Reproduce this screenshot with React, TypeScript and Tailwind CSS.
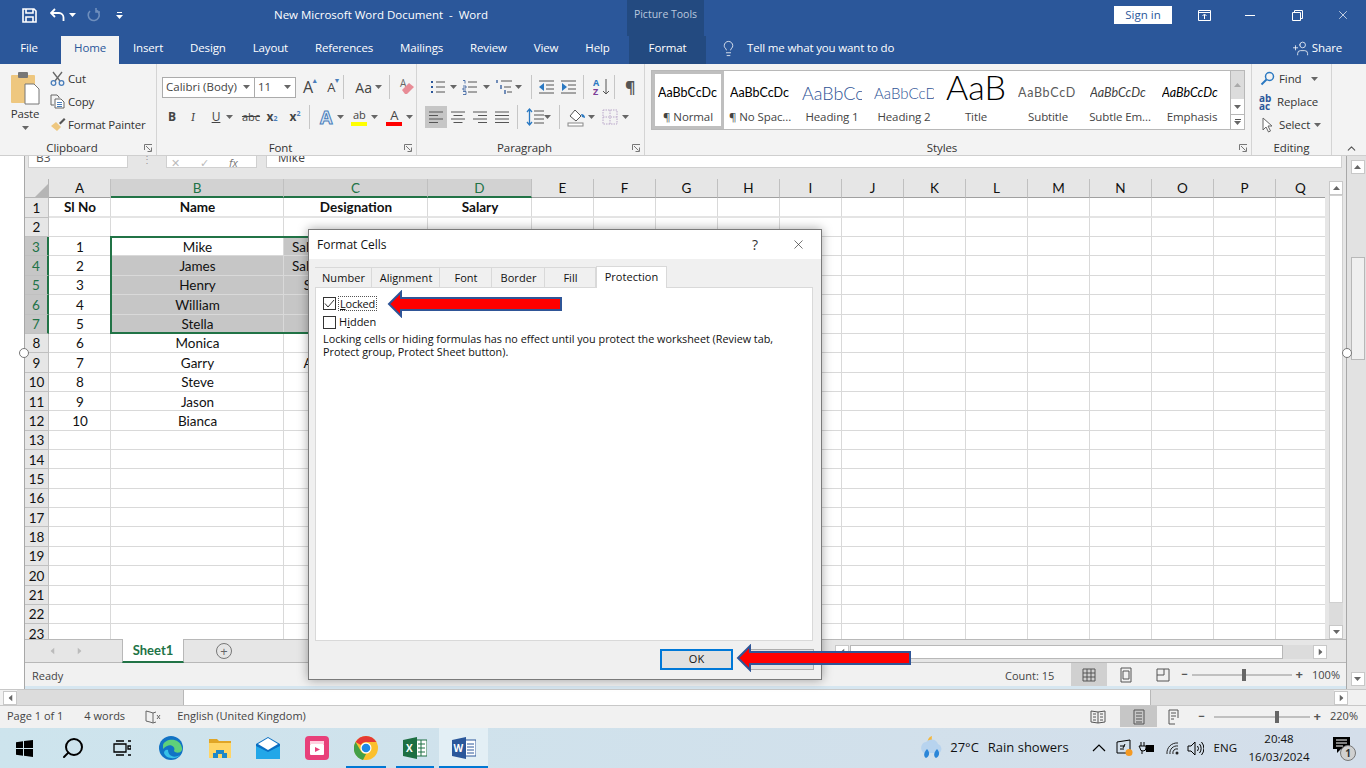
import { ChevronUp, Lightbulb, Search, UserPlus, X } from "lucide-react";
import type { ReactNode } from "react";

const ui = "font-['Open_Sans','Noto_Sans',sans-serif]";

const names = ["Mike", "James", "Henry", "William", "Stella", "Monica", "Garry", "Steve", "Jason", "Bianca"];
const designation = ["Sales Representatives", "Sales Representatives", "Sales Coordinator", "Sales", "Sales", "Sales", "Account Manager", "", "", ""];
const columnLetters = ["A", "B", "C", "D", "E", "F", "G", "H", "I", "J", "K", "L", "M", "N", "O", "P", "Q"];

function Caret({ className = "" }: { className?: string }) {
  return (
    <svg width="7" height="4" viewBox="0 0 7 4" className={className}>
      <path d="M0 0h7L3.5 4z" fill="#666" />
    </svg>
  );
}

function Launcher() {
  return (
    <svg width="9" height="9" viewBox="0 0 9 9" className="shrink-0">
      <path d="M.5 6V.5H8M2 2l4.5 4.5M7.5 3.500v4h-4" fill="none" stroke="#777" />
    </svg>
  );
}

function Sep({ className = "" }: { className?: string }) {
  return <div className={`w-px h-[24px] bg-[#c6c6c6] shrink-0 ${className}`} />;
}

function Btn({ children, className = "" }: { children: ReactNode; className?: string }) {
  return <div className={`w-[22px] h-[22px] flex items-center justify-center shrink-0 ${className}`}>{children}</div>;
}

function Lines({ d }: { d: string }) {
  return (
    <svg width="16" height="16" viewBox="0 0 16 16">
      <path d={d} stroke="#555" strokeWidth="1" fill="none" />
    </svg>
  );
}

function Group({ label, width, launcher = true, children }: { label: string; width: string; launcher?: boolean; children: ReactNode }) {
  return (
    <div className={`${width} shrink-0 h-full flex flex-col border-r border-[#d4d4d4]`}>
      <div className="h-[74px] shrink-0">{children}</div>
      <div className={`flex-1 flex items-center relative text-[11.500px] tracking-[-0.1px] text-[#333] pt-[1px] ${launcher ? "pr-[12px]" : ""}`}>
        <span className="flex-1 text-center">{label}</span>
        {launcher && (
          <span className="absolute right-[3px] top-[6px]">
            <Launcher />
          </span>
        )}
      </div>
    </div>
  );
}

function TitleBar() {
  return (
    <div className="h-[36px] shrink-0 flex items-center text-white relative pb-[6px]">
      <svg width="15" height="15" viewBox="0 0 15 15" className="ml-[22px]">
        <path d="M1 1h11l2 2v11H1zM4 1v4h7V1M4 14V9h7v5" fill="none" stroke="#fff" strokeWidth="1.600" />
      </svg>
      <svg width="16" height="14" viewBox="0 0 16 14" className="ml-[13px]">
        <path d="M5 1 1 5l4 4M1.500 5H9a4.500 4.500 0 0 1 4.500 4.500V13" fill="none" stroke="#fff" strokeWidth="1.800" />
      </svg>
      <Caret className="ml-[3px] [&_path]:fill-white" />
      <svg width="14" height="14" viewBox="0 0 14 14" className="ml-[11px]">
        <path d="M3 3a5.500 5.500 0 1 0 6-1M9 0v4h4" fill="none" stroke="#6f8fbd" strokeWidth="1.600" />
      </svg>
      <div className="ml-[15px] flex flex-col items-center gap-[2px]">
        <div className="w-[5px] h-px bg-white" />
        <Caret className="[&_path]:fill-white" />
      </div>
      <div className="ml-[150px] w-[216px] text-[11.500px] whitespace-pre text-center">New Microsoft Word Document  -  Word</div>
      <div className="ml-[138px] w-[77px] self-start h-[36px] pb-[6px] bg-[#234a80] text-[10.500px] text-[#b9c8de] flex items-center justify-center">Picture Tools</div>
      <div className="ml-[410px] w-[58px] h-[18px] bg-white text-[#2b579a] text-[11.500px] flex items-center justify-center">Sign in</div>
      <svg width="13" height="11" viewBox="0 0 13 11" className="ml-[26px]">
        <path d="M.5.500h12v10H.5zM.5 2.500h12M6.500 9V4.500M4.500 6l2-2 2 2" fill="none" stroke="#fff" />
      </svg>
      <div className="ml-[34px] w-[10px] h-px bg-white" />
      <svg width="11" height="11" viewBox="0 0 11 11" className="ml-[37px]">
        <path d="M.5 2.500h8v8h-8zM2.500 2.500v-2h8v8h-2" fill="none" stroke="#fff" />
      </svg>
      <X size={14} strokeWidth={1.200} className="ml-[33px]" />
    </div>
  );
}

function TabBar() {
  const tabs = ["Insert", "Design", "Layout", "References", "Mailings", "Review", "View", "Help"];
  return (
    <div className="h-[28px] shrink-0 flex items-stretch text-white text-[11.500px] tracking-[-0.15px]">
      <div className="w-[61px] flex items-center justify-center pb-[4px] pr-[3px]">File</div>
      <div className="w-[58px] bg-[#f3f3f3] text-[#2b579a] flex items-center justify-center pb-[4px]">Home</div>
      <div className="flex items-center pl-[14px] gap-[27px] w-[510px] pb-[4px]">
        {tabs.map((t) => (
          <span key={t}>{t}</span>
        ))}
      </div>
      <div className="w-[77px] bg-[#234a80] flex items-center justify-center pb-[4px]">Format</div>
      <div className="flex items-center ml-[14px] gap-[10px] pb-[4px]">
        <Lightbulb size={17} strokeWidth={1.100} />
        <span>Tell me what you want to do</span>
      </div>
      <div className="flex items-center gap-[3px] ml-auto mr-[24px] pb-[4px]">
        <UserPlus size={17} strokeWidth={1.100} className="-scale-x-100" />
        <span>Share</span>
      </div>
    </div>
  );
}

function ClipboardGroup() {
  return (
    <Group label="Clipboard" width="w-[157px]">
      <div className="flex h-full tracking-[-0.2px]">
        <div className="w-[50px] flex flex-col items-center pt-[7px]">
          <svg width="30" height="34" viewBox="0 0 30 34">
            <rect x="1" y="4" width="24" height="28" rx="1" fill="#eec77f" />
            <rect x="8" y="1" width="10" height="6" rx="1" fill="#777" />
            <path d="M15 13h9l5 5v15H15z" fill="#fff" stroke="#777" />
          </svg>
          <span className="text-[11.500px] leading-[16px] text-[#333] mt-[1px]">Paste</span>
          <Caret className="mt-[4px]" />
        </div>
        <div className="flex flex-col pt-[3px] text-[11.500px] text-[#333]">
          <div className="h-[23px] flex items-center gap-[3px]">
            <svg width="15" height="15" viewBox="0 0 15 15">
              <path d="M3 1l7 9M12 1L5 10" stroke="#666" strokeWidth="1.300" />
              <circle cx="3.500" cy="12" r="2.300" fill="none" stroke="#4a7ebb" strokeWidth="1.300" />
              <circle cx="11.500" cy="12" r="2.300" fill="none" stroke="#4a7ebb" strokeWidth="1.300" />
            </svg>
            <span>Cut</span>
          </div>
          <div className="h-[23px] flex items-center gap-[3px]">
            <svg width="15" height="15" viewBox="0 0 15 15">
              <path d="M1 1h6l2 2v1M1 1v10h3" fill="none" stroke="#666" />
              <path d="M5 5h6l3 3v6H5z" fill="#fff" stroke="#666" />
              <path d="M7 8.500h5M7 10.500h5M7 12.500h5" stroke="#4a7ebb" />
            </svg>
            <span>Copy</span>
          </div>
          <div className="h-[23px] flex items-center gap-[2px]">
            <svg width="16" height="15" viewBox="0 0 16 15">
              <path d="M1 9l5-4 5 5-4 4z" fill="#eec77f" />
              <path d="M9 6l5-5 1.500 1.500-5 5z" fill="#555" />
            </svg>
            <span>Format Painter</span>
          </div>
        </div>
      </div>
    </Group>
  );
}

function FontGroup() {
  return (
    <Group label="Font" width="w-[260px]">
      <div className="flex items-center h-[22px] mt-[12px] ml-[5px] text-[#444]">
        <div className="w-[93px] h-[21px] bg-white border border-[#ababab] flex items-center justify-between pl-[3px] pr-[4px] text-[11.500px]">
          <span className="whitespace-nowrap">Calibri (Body)</span>
          <Caret />
        </div>
        <div className="w-[42px] h-[21px] -ml-px bg-white border border-[#ababab] flex items-center justify-between pl-[3px] pr-[4px] text-[11.500px]">
          <span>11</span>
          <Caret />
        </div>
        <span className="ml-[7px] text-[16px] leading-none relative">
          A<span className="absolute -right-[5px] -top-[2px] text-[#4a7ebb] text-[7px]">▲</span>
        </span>
        <span className="ml-[14px] text-[13px] leading-none relative">
          A<span className="absolute -right-[5px] -top-[4px] text-[#4a7ebb] text-[7px]">▼</span>
        </span>
        <Sep className="ml-[8px]" />
        <span className="ml-[11px] text-[14px]">Aa</span>
        <Caret className="ml-[3px]" />
        <Sep className="ml-[7px]" />
        <svg width="16" height="18" viewBox="0 0 16 18" className="ml-[9px]">
          <text x="1" y="9" fontSize="10" fill="#666">A</text>
          <path d="M3 12l7-7 5 4-7 7H6z" fill="#e88c96" />
        </svg>
      </div>
      <div className="flex items-center h-[22px] mt-[8px] ml-[4px] text-[#444] text-[12px]">
        <Btn className="font-bold">B</Btn>
        <Btn className="italic font-serif -ml-px">I</Btn>
        <Btn className="underline ml-px">U</Btn>
        <Caret className="-ml-[1px] mr-[1px]" />
        <Btn className="line-through text-[11px] ml-[6px]">abc</Btn>
        <Btn className="font-bold -ml-[1px]">
          x<sub className="text-[#4a7ebb] text-[7px]">2</sub>
        </Btn>
        <Btn className="font-bold ml-px">
          x<sup className="text-[#4a7ebb] text-[7px]">2</sup>
        </Btn>
        <Sep className="ml-[3px]" />
        <span className="ml-[10px] text-[18px] leading-none font-bold text-[#dce8f5] [-webkit-text-stroke:1px_#4a7ebb]">A</span>
        <Caret className="ml-[5px]" />
        <div className="ml-[7px] w-[16px] flex flex-col items-center">
          <span className="text-[11px] leading-[14px] whitespace-nowrap">ab</span>
          <div className="w-[16px] h-[4px] bg-[#ffff00]" />
        </div>
        <Caret className="ml-[4px]" />
        <div className="ml-[8px] w-[16px] flex flex-col items-center">
          <span className="text-[13px] leading-[14px]">A</span>
          <div className="w-[16px] h-[4px] bg-[#ff0000]" />
        </div>
        <Caret className="ml-[4px]" />
      </div>
    </Group>
  );
}

function ParagraphGroup() {
  const list = "M6 3h9M6 8h9M6 13h9";
  return (
    <Group label="Paragraph" width="w-[228px]">
      <div className="flex items-center h-[22px] mt-[12px] ml-[13px]">
        <svg width="16" height="16" viewBox="0 0 16 16">
          <path d={list} stroke="#555" />
          <path d="M1 3h2M1 8h2M1 13h2" stroke="#2b579a" strokeWidth="2" />
        </svg>
        <Caret className="ml-[4px]" />
        <svg width="16" height="16" viewBox="0 0 16 16" className="ml-[5px]">
          <path d={list} stroke="#555" />
          <path d="M1 1.500h2v3M1 7h3v2H1v2h3M1 12.500h3v3H1" stroke="#2b579a" fill="none" strokeWidth=".8" />
        </svg>
        <Caret className="ml-[5px]" />
        <svg width="17" height="16" viewBox="0 0 17 16" className="ml-[6px]">
          <path d="M5 2h11M8 8h7M11 13h5" stroke="#555" />
          <path d="M1 1v3M5 6v4M9 11v4" stroke="#2b579a" strokeWidth="1.300" />
        </svg>
        <Caret className="ml-[2px]" />
        <Sep className="ml-[9px]" />
        <svg width="17" height="16" viewBox="0 0 17 16" className="ml-[6px]">
          <path d="M1 2h15M8 6h8M8 10h8M1 14h15" stroke="#555" />
          <path d="M1 8l5-4v8z" fill="#2b79c2" />
        </svg>
        <svg width="17" height="16" viewBox="0 0 17 16" className="ml-[5px]">
          <path d="M1 2h15M8 6h8M8 10h8M1 14h15" stroke="#555" />
          <path d="M7 8L2 4v8z" fill="#2b79c2" />
        </svg>
        <Sep className="ml-[6px]" />
        <div className="ml-[9px] w-[18px] flex items-center">
          <svg width="18" height="18" viewBox="0 0 18 18">
            <text x="0" y="8" fontSize="9" fill="#2b79c2" fontWeight="bold">A</text>
            <text x="0" y="17" fontSize="9" fill="#7d3f98" fontWeight="bold">Z</text>
            <path d="M13 1v15M10 13l3 3 3-3" stroke="#555" fill="none" />
          </svg>
        </div>
        <Sep className="ml-[3px]" />
        <span className="ml-[10px] text-[16px] text-[#555] font-bold leading-none">¶</span>
      </div>
      <div className="flex items-center h-[22px] mt-[8px] ml-[8px]">
        <Btn className="bg-[#c6c6c6]">
          <Lines d="M1 3h14M1 6.500h9M1 10h14M1 13.500h9" />
        </Btn>
        <Btn>
          <Lines d="M1 3h14M3.500 6.500h9M1 10h14M3.500 13.500h9" />
        </Btn>
        <Btn>
          <Lines d="M1 3h14M6 6.500h9M1 10h14M6 13.500h9" />
        </Btn>
        <Btn>
          <Lines d="M1 3h14M1 6.500h14M1 10h14M1 13.500h14" />
        </Btn>
        <Sep className="ml-[4px]" />
        <svg width="18" height="20" viewBox="0 0 18 20" className="ml-[8px]">
          <path d="M8 4h10M8 8h10M8 12h10M8 16h10" stroke="#555" />
          <path d="M3.500 3v14M1 5l2.500-3L6 5M1 15l2.500 3L6 15" stroke="#2b79c2" strokeWidth="1.300" fill="none" />
        </svg>
        <Caret />
        <Sep className="ml-[8px]" />
        <svg width="20" height="20" viewBox="0 0 20 20" className="ml-[7px]">
          <path d="M3 9l5-6 6 6-5 5z" fill="#fff" stroke="#555" />
          <path d="M14 7c3 0 4 2 4 4l-3-1z" fill="#2b79c2" />
          <rect x="1" y="16" width="15" height="3" fill="#fff" stroke="#888" />
        </svg>
        <Caret className="ml-[1px]" />
        <svg width="16" height="16" viewBox="0 0 16 16" className="ml-[7px]">
          <path d="M1 1h14v14H1zM8 1v14M1 8h14" fill="none" stroke="#b9a6c9" strokeDasharray="1.500 1" />
        </svg>
        <Caret className="ml-[4px]" />
      </div>
    </Group>
  );
}

function StyleItem({ preview, label, selected = false }: { preview: ReactNode; label: string; selected?: boolean }) {
  return (
    <div className={`w-[72px] h-full flex flex-col items-center overflow-hidden ${selected ? "border-[3px] border-[#bfbfbf]" : "border-[3px] border-transparent"}`}>
      <div className="h-[33px] w-[60px] shrink-0 overflow-hidden flex items-center justify-start pt-[5px] whitespace-nowrap">{preview}</div>
      <div className="text-[11.500px] tracking-[-0.1px] text-[#444] whitespace-nowrap leading-[18px] pt-[1px]">{label}</div>
    </div>
  );
}

function StylesGroup() {
  const lato = "font-['Lato',sans-serif]";
  return (
    <Group label="Styles" width="w-[607px]">
      <div className="flex h-[60px] mt-[6px] ml-[6px] w-[594px] border border-[#b8b8b8] bg-white">
        <div className="flex-1 flex items-stretch">
          <StyleItem selected label="¶ Normal" preview={<span className={`${lato} text-[12.500px] text-black`}>AaBbCcDc</span>} />
          <StyleItem label="¶ No Spac..." preview={<span className={`${lato} text-[12.500px] text-black`}>AaBbCcDc</span>} />
          <StyleItem label="Heading 1" preview={<span className={`${lato} text-[18px] font-light text-[#2f5496]`}>AaBbCc</span>} />
          <StyleItem label="Heading 2" preview={<span className={`${lato} text-[15px] font-light text-[#2f5496]`}>AaBbCcD</span>} />
          <StyleItem label="Title" preview={<span className={`${lato} text-[34px] font-light text-black leading-none -mt-[13px]`}>AaB</span>} />
          <StyleItem label="Subtitle" preview={<span className={`${lato} text-[12.500px] tracking-[0.7px] text-[#5a5a5a]`}>AaBbCcD</span>} />
          <StyleItem label="Subtle Em..." preview={<span className={`${lato} text-[12.500px] italic text-[#404040]`}>AaBbCcDc</span>} />
          <StyleItem label="Emphasis" preview={<span className={`${lato} text-[12.500px] italic text-black`}>AaBbCcDc</span>} />
        </div>
        <div className="w-[14px] flex flex-col border-l border-[#b8b8b8]">
          <div className="h-[28px] bg-[#dcdcdc] flex items-center justify-center">
            <Caret className="rotate-180 [&_path]:fill-[#aaa]" />
          </div>
          <div className="h-[16px] border-b border-[#b8b8b8] flex items-center justify-center">
            <Caret />
          </div>
          <div className="flex-1 flex flex-col items-center justify-center gap-[1px]">
            <div className="w-[6px] h-px bg-[#555]" />
            <Caret />
          </div>
        </div>
      </div>
    </Group>
  );
}

function EditingGroup() {
  return (
    <Group label="Editing" width="w-[80px]" launcher={false}>
      <div className="flex flex-col pt-[3px] pl-[8px] text-[11.500px] tracking-[-0.1px] text-[#333]">
        <div className="h-[23px] flex items-center gap-[4px]">
          <svg width="15" height="15" viewBox="0 0 15 15">
            <circle cx="9.500" cy="5.500" r="4" fill="none" stroke="#2b79c2" strokeWidth="1.500" />
            <path d="M6.500 8.500 1.500 13.500" stroke="#2b79c2" strokeWidth="2" />
          </svg>
          <span>Find</span>
          <Caret className="ml-[5px]" />
        </div>
        <div className="h-[23px] flex items-center gap-[2px] -ml-[1px]">
          <span className="text-[10px] leading-[8px] w-[16px] font-bold text-[#2b579a]">
            ab
            <br />
            ac
          </span>
          <span>Replace</span>
        </div>
        <div className="h-[23px] flex items-center gap-[4px]">
          <svg width="15" height="16" viewBox="0 0 15 16">
            <path d="M3 1v12l3-3 2.500 5 2-1-2.500-5h4z" fill="#fff" stroke="#666" />
          </svg>
          <span>Select</span>
          <Caret />
        </div>
      </div>
    </Group>
  );
}

function Ribbon() {
  return (
    <div className="h-[92px] shrink-0 bg-[#f3f3f3] border-b border-[#cfcfcf] flex relative">
      <ClipboardGroup />
      <FontGroup />
      <ParagraphGroup />
      <StylesGroup />
      <EditingGroup />
      <ChevronUp size={13} className="text-[#555] ml-[13px] mt-[78px]" />
    </div>
  );
}

function ScrollBtn({ dir }: { dir: "up" | "down" | "left" | "right" }) {
  const r = dir === "up" ? "rotate-180" : dir === "left" ? "rotate-90" : dir === "right" ? "-rotate-90" : "";
  return (
    <div className="w-[14px] h-[14px] bg-white border border-[#c8c8c8] flex items-center justify-center shrink-0">
      <Caret className={r} />
    </div>
  );
}

function Sheet() {
  const gridCell = "border-r border-b border-[#d9d9d9] flex items-center justify-center overflow-hidden whitespace-nowrap pt-[1px] pl-[1px]";
  const rows = Array.from({ length: 23 }, (_, i) => i + 1);
  return (
    <div className="relative flex-1 overflow-hidden grid grid-cols-[24px_62px_173px_144px_104px_repeat(12,62px)_50px] auto-rows-[19.360px] content-start font-['Lato',sans-serif] text-[13.500px] text-[#111] w-[1301px] bg-white">
      <div className="bg-[#e6e6e6] border-r border-b border-[#b5b5b5] flex items-end justify-end">
        <svg width="14" height="14" viewBox="0 0 14 14">
          <path d="M14 1v13H1z" fill="#b5b5b5" />
        </svg>
      </div>
      {columnLetters.map((c, i) => (
        <div
          key={c}
          className={`border-r border-[#c0c0c0] flex items-center justify-center ${
            i >= 1 && i <= 3 ? "bg-[#d2d2d2] border-b-2 border-b-[#217346] text-[#217346]" : "bg-[#e6e6e6] border-b border-b-[#a0a0a0]"
          }`}
        >
          {c}
        </div>
      ))}
      {rows.map((r) => {
        const sel = r >= 3 && r <= 7;
        const n = r - 3;
        return (
          <div key={r} className="contents">
            <div className={`border-r flex items-center justify-center border-b border-[#c0c0c0] pt-[1px] ${sel ? "bg-[#c6c6c6] text-[#217346] border-r-2 border-r-[#217346]" : "bg-[#e6e6e6]"}`}>{r}</div>
            {columnLetters.map((c, i) => {
              const inSel = sel && i >= 1 && i <= 3 && !(r === 3 && i === 1);
              let text = "";
              let bold = false;
              if (r === 1) {
                text = ["Sl No", "Name", "Designation", "Salary"][i] ?? "";
                bold = true;
              } else if (r >= 3 && r <= 12) {
                if (i === 0) text = String(n + 1);
                if (i === 1) text = names[n];
                if (i === 2) text = designation[n];
              }
              return (
                <div key={c} className={`${gridCell} ${inSel ? "bg-[#c6c6c6] border-[#b4b4b4]" : ""} ${bold ? "font-bold" : ""} ${r === 1 ? "border-b-2 border-b-[#e4e4e4]" : ""}`}>
                  {text}
                </div>
              );
            })}
          </div>
        );
      })}
      {/* selection outline */}
      <div className="absolute left-[85px] top-[57px] w-[422px] h-[98px] border-2 border-[#217346]" />
    </div>
  );
}

function ExcelWindow() {
  return (
    <div className="w-[1323px] shrink-0 flex flex-col border-x border-[#a8a8a8] bg-[#e6e6e6]">
      <div className="h-[23px] shrink-0 flex pl-[3px]">
        <div className="w-[100px] h-[12px] bg-white border-x border-b border-[#d0d0d0] overflow-hidden text-[12px] text-[#555] pl-[7px] leading-[4px]">B3</div>
        <div className="w-[38px] flex justify-center text-[#999] text-[10px] leading-[6px]">⋮</div>
        <div className="w-[91px] h-[12px] bg-white border-x border-b border-[#d0d0d0] flex items-end overflow-hidden text-[#bbb] text-[11px] leading-[8px] pl-[4px]">
          <span>✕</span>
          <span className="ml-[20px]">✓</span>
          <span className="ml-[20px] text-[#777] italic">fx</span>
        </div>
        <div className="w-[1076px] ml-[9px] h-[12px] bg-white border-x border-b border-[#d0d0d0] overflow-hidden text-[12px] text-[#444] pl-[11px] leading-[4px]">Mike</div>
      </div>
      <div className="flex flex-1 min-h-0">
        <Sheet />
        <div className="ml-[4px] w-[14px] flex flex-col pt-[2px] bg-[#e6e6e6]">
          <ScrollBtn dir="up" />
          <div className="flex-1 flex flex-col bg-[#dcdcdc]">
            <div className="h-[408px] bg-white border border-[#d0d0d0]" />
          </div>
          <ScrollBtn dir="down" />
        </div>
        <div className="w-[3px]" />
      </div>
      <div className="h-[24px] shrink-0 bg-[#e6e6e6] border-y border-[#b8b8b8] flex items-center text-[13px]">
        <div className="w-[97px] flex justify-center gap-[20px] pr-[15px]">
          <Caret className="rotate-90 [&_path]:fill-[#bbb]" />
          <Caret className="-rotate-90 [&_path]:fill-[#bbb]" />
        </div>
        <div className="w-[62px] h-[24px] -mt-[1px] bg-white border-x border-[#b8b8b8] border-b-2 border-b-[#217346] flex items-center justify-center pt-[2px] font-['Lato',sans-serif] font-bold text-[#217346]">Sheet1</div>
        <div className="ml-[32px] w-[16px] h-[16px] rounded-full border border-[#777] flex items-center justify-center text-[#666] leading-none">+</div>
        <div className="ml-auto flex items-center mr-[19px] mt-[2px]">
          <ScrollBtn dir="left" />
          <div className="ml-[1px] w-[433px] h-[14px] bg-white border border-[#b8b8b8]" />
          <div className="w-[30px] h-[14px] bg-[#dcdcdc]" />
          <ScrollBtn dir="right" />
        </div>
      </div>
      <div className="h-[23px] shrink-0 bg-[#f1f1f1] flex items-center text-[11px] text-[#444]">
        <span className="ml-[7px] pt-[3px]">Ready</span>
        <span className="ml-auto pt-[3px]">Count: 15</span>
        <div className="ml-[17px] w-[36px] h-full bg-[#d0d0d0] flex items-center justify-center">
          <Lines d="M2 2h12v12H2zM2 6h12M2 10h12M6 2v12M10 2v12" />
        </div>
        <div className="ml-[11px]">
          <Lines d="M3 1h10v14H3zM5 4h6v8H5z" />
        </div>
        <div className="ml-[21px]">
          <Lines d="M2 2h12v12H2zM9 2v6H2" />
        </div>
        <span className="ml-[10px] font-bold text-[#555]">−</span>
        <div className="ml-[4px] w-[100px] h-[2px] bg-[#c0c0c0] relative">
          <div className="absolute left-[50px] -top-[5px] w-[4px] h-[12px] bg-[#666]" />
        </div>
        <span className="ml-[4px] font-bold text-[#555] text-[13px]">+</span>
        <span className="ml-[9px] mr-[6px] pt-[1px]">100%</span>
      </div>
      <div className="h-[3px] shrink-0 bg-[#d6e6f0]" />
    </div>
  );
}

function WordScroll() {
  return (
    <div className="flex-1 bg-[#e2e2e2] flex flex-col items-center pt-[4px] pb-[3px] pl-[2px]">
      <ScrollBtn dir="up" />
      <div className="flex-1 w-[14px]">
        <div className="mt-[83px] h-[103px] bg-[#f0f0f0] border border-[#b8b8b8]" />
      </div>
      <ScrollBtn dir="down" />
    </div>
  );
}

function WordBottom() {
  return (
    <>
      <div className="h-[17px] shrink-0 bg-[#f1f1f1] border-y border-[#c8c8c8] flex items-center pl-[3px]">
        <ScrollBtn dir="left" />
        <div className="w-[166px] h-full bg-[#dcdcdc]" />
        <div className="w-[968px] h-full bg-white border-x border-[#b8b8b8]" />
        <div className="w-[183px] h-full bg-[#dcdcdc]" />
        <ScrollBtn dir="right" />
      </div>
      <div className="h-[22px] shrink-0 bg-[#f1f1f1] flex items-center text-[11px] text-[#444] pb-[1px]">
        <span className="ml-[7px]">Page 1 of 1</span>
        <span className="ml-[21px]">4 words</span>
        <svg width="16" height="14" viewBox="0 0 16 14" className="ml-[20px]">
          <path d="M1 1l4 1 3 1v10l-3-1-4-1zM8 3l3-1M8 13l3-1M12 5l3 4M15 5l-3 4" fill="none" stroke="#666" />
        </svg>
        <span className="ml-[16px]">English (United Kingdom)</span>
        <div className="ml-auto">
          <Lines d="M8 3v11M1 2l7 1 7-1v11l-7 1-7-1zM3 5h3M3 8h3M3 11h3M10 5h3M10 8h3M10 11h3" />
        </div>
        <div className="ml-[14px] w-[37px] h-full bg-[#c6c6c6] flex items-center justify-center">
          <Lines d="M3 1h10v14H3zM5 4h6M5 7h6M5 10h6M5 13h6" />
        </div>
        <div className="ml-[9px]">
          <Lines d="M3 1h9v8M3 1v14h6M5 4h5M5 7h5M5 10h3" />
        </div>
        <span className="ml-[16px] font-bold text-[#555]">−</span>
        <div className="ml-[9px] w-[96px] h-[2px] bg-[#c0c0c0] relative">
          <div className="absolute left-[61px] -top-[5px] w-[4px] h-[12px] bg-[#666]" />
        </div>
        <span className="ml-[4px] font-bold text-[#555] text-[13px]">+</span>
        <span className="ml-[9px] mr-[8px]">220%</span>
      </div>
    </>
  );
}

function TaskIcon({ children, active = false, bar }: { children: ReactNode; active?: boolean; bar?: string }) {
  return (
    <div className={`w-[48.800px] h-full flex items-center justify-center relative shrink-0 ${active ? "bg-[#e3eff5]" : ""}`}>
      {children}
      {bar && <div className={`absolute bottom-0 h-[2px] bg-[#0078d4] ${bar}`} />}
    </div>
  );
}

function Taskbar() {
  return (
    <div className="h-[40px] shrink-0 bg-gradient-to-r from-[#cde4ed] to-[#d4deea] flex items-stretch text-[#111]">
      <TaskIcon>
        <svg width="17" height="17" viewBox="0 0 17 17">
          <path d="M0 2.300 7 1.300V8H0zM8 1.100 17 0v8H8zM0 9h7v6.700l-7-1zM8 9h9v8l-9-1.200z" fill="#000" />
        </svg>
      </TaskIcon>
      <TaskIcon>
        <Search size={24} strokeWidth={2} className="-scale-x-100 text-black" />
      </TaskIcon>
      <TaskIcon>
        <svg width="18" height="16" viewBox="0 0 18 16">
          <path d="M3 1h8M1 4h12v8H1zM3 15h8M15 1h3M15 6h3v3h-3zM15 15h3" fill="none" stroke="#000" strokeWidth="1.300" />
        </svg>
      </TaskIcon>
      <TaskIcon>
        <svg width="24" height="24" viewBox="0 0 24 24">
          <circle cx="12" cy="12" r="12" fill="#1173c5" />
          <path d="M4 9c2-7 17-8 19 3 1 5-6 6-8 3 2-4-3-7-7-5-2 1-3 2-4 3z" fill="#5fd07a" />
          <path d="M9 14c0 5 5 9 12 5-4 5-14 4-16-2 0-2 2-4 4-3z" fill="#36c0e8" />
        </svg>
      </TaskIcon>
      <TaskIcon>
        <svg width="22" height="20" viewBox="0 0 22 20">
          <path d="M0 1h8l2 2h12v3H0z" fill="#e0a526" />
          <path d="M0 5h22v15H0z" fill="#ffd566" />
          <path d="M7 12h8v3h3v5H4v-5h3z" fill="#1e88c9" />
          <rect x="9" y="16" width="4" height="4" fill="#ffd566" />
        </svg>
      </TaskIcon>
      <TaskIcon>
        <svg width="24" height="22" viewBox="0 0 24 22">
          <path d="M12 0 24 7v15H0V7z" fill="#0a6fc2" />
          <path d="M2 7 12 1l10 6-10 6z" fill="#fff" />
          <path d="M0 9l12 6 12-6v13H0z" fill="#22a7e8" />
        </svg>
      </TaskIcon>
      <TaskIcon>
        <svg width="24" height="24" viewBox="0 0 24 24">
          <rect width="24" height="24" rx="4" fill="#e8407a" />
          <rect x="5" y="8" width="14" height="11" rx="1" fill="#fff" />
          <path d="M5 5h14v3H5z" fill="#ffd0e0" />
          <path d="M10 11l5 2.500-5 2.500z" fill="#e8407a" />
        </svg>
      </TaskIcon>
      <TaskIcon bar="w-[40px]">
        <svg width="24" height="24" viewBox="0 0 24 24">
          <circle cx="12" cy="12" r="12" fill="#fbc02d" />
          <path d="M12 0a12 12 0 0 1 10.400 6H12a6 6 0 0 0-5.200 3L1.600 6A12 12 0 0 1 12 0z" fill="#e53935" />
          <path d="M1.600 6l5.200 9a6 6 0 0 0 5.200 3l-3 6A12 12 0 0 1 1.600 6z" fill="#43a047" />
          <circle cx="12" cy="12" r="5.500" fill="#fff" />
          <circle cx="12" cy="12" r="4.300" fill="#1e88e5" />
        </svg>
      </TaskIcon>
      <TaskIcon bar="w-[38px]">
        <svg width="24" height="22" viewBox="0 0 24 22">
          <path d="M12 3h12v16H12z" fill="#fff" stroke="#1d6f42" />
          <path d="M15 7h7M15 11h7M15 15h7M18 3v16" stroke="#1d6f42" />
          <path d="M0 3 14 0v22L0 19z" fill="#1d6f42" />
          <text x="3" y="15" fontSize="10" fontWeight="bold" fill="#fff">X</text>
        </svg>
      </TaskIcon>
      <TaskIcon active bar="w-full">
        <svg width="24" height="22" viewBox="0 0 24 22">
          <path d="M12 3h12v16H12z" fill="#fff" stroke="#2b579a" />
          <path d="M15 7h7M15 10h7M15 13h7M15 16h7" stroke="#2b579a" />
          <path d="M0 3 14 0v22L0 19z" fill="#2b579a" />
          <text x="1.500" y="15" fontSize="10" fontWeight="bold" fill="#fff">W</text>
        </svg>
      </TaskIcon>
      <div className="ml-auto flex items-center text-[13px]">
        <svg width="26" height="28" viewBox="0 0 26 28">
          <path d="M14 2c-1 4 1 7 5 7-2 3-7 3-9 0-1-3 1-6 4-7z" fill="#f5b73c" />
          <path d="M6 19a6 6 0 0 1 2-11 7 7 0 0 1 12 2 5 5 0 0 1 1 9z" fill="#b7d3ee" />
          <path d="M8 24c-3-2-2-6 1-9 3 3 3 7-1 9zM18 24c-3-2-2-6 1-9 3 3 3 7-1 9z" fill="#2b86d8" />
        </svg>
        <span className="ml-[6px]">27°C</span>
        <span className="ml-[9px]">Rain showers</span>
        <svg width="14" height="8" viewBox="0 0 14 8" className="ml-[23px]">
          <path d="M1 7l6-6 6 6" fill="none" stroke="#000" strokeWidth="1.200" />
        </svg>
        <svg width="18" height="18" viewBox="0 0 18 18" className="ml-[10px]">
          <path d="M1 3l13-2v13H1z" fill="none" stroke="#000" />
          <path d="M4 7h5M4 10h4M9 5l-2 4" fill="none" stroke="#000" />
          <circle cx="13" cy="13.500" r="3.500" fill="#f59a23" />
        </svg>
        <svg width="17" height="14" viewBox="0 0 17 14" className="ml-[4px]">
          <path d="M3 1v4M6 1v4M1 5h7v2a3 3 0 0 1-6 0zM4 10v3" fill="none" stroke="#000" />
          <rect x="8" y="4" width="8" height="7" fill="#000" />
        </svg>
        <svg width="16" height="16" viewBox="0 0 16 16" className="ml-[11px]">
          <path d="M1 14a10 10 0 0 1 11-11M4 14a7 7 0 0 1 8-8M7 14a4 4 0 0 1 5-5" fill="none" stroke="#222" />
          <circle cx="11" cy="13" r="1.500" fill="#222" />
        </svg>
        <svg width="17" height="15" viewBox="0 0 17 15" className="ml-[5px]">
          <path d="M1 5h3l4-4v13l-4-4H1zM10.500 5a4 4 0 0 1 0 5M12.500 3a7 7 0 0 1 0 9M14.500 1a10 10 0 0 1 0 13" fill="none" stroke="#000" />
        </svg>
        <span className="ml-[10px] text-[11.500px]">ENG</span>
        <div className="ml-[13px] w-[58px] flex flex-col items-center text-[11.500px] leading-[18px]">
          <span>20:48</span>
          <span>16/03/2024</span>
        </div>
        <div className="ml-[25px] mr-[9px] w-[24px] h-[28px] relative">
          <svg width="17" height="16" viewBox="0 0 17 16" className="absolute left-0 top-[3px]">
            <path d="M0 0h17v12H8l-4 4v-4H0z" fill="#000" />
            <path d="M3 3h11M3 6h11M3 9h7" stroke="#fff" />
          </svg>
          <div className="absolute left-[7px] top-[11px] w-[16px] h-[16px] rounded-full bg-[#d0d0d0] border border-[#777] flex items-center justify-center text-[10px] font-bold text-[#333]">1</div>
        </div>
      </div>
    </div>
  );
}

function Dialog() {
  const tabs = [
    { t: "Number", w: "w-[57px]" },
    { t: "Alignment", w: "w-[68px]" },
    { t: "Font", w: "w-[52px]" },
    { t: "Border", w: "w-[53px]" },
    { t: "Fill", w: "w-[51px]" },
  ];
  return (
    <div className="absolute left-[308px] top-[229px] w-[514px] h-[451px] bg-[#f0f0f0] border border-[#7a7a7a] shadow-[0_0_10px_rgba(0,0,0,0.35)] flex flex-col text-[#111] text-[11px]">
      <div className="h-[29px] bg-white flex items-center shrink-0 text-[12px]">
        <span className="ml-[8px]">Format Cells</span>
        <span className="ml-auto text-[14px] text-[#333]">?</span>
        <X size={15} strokeWidth={1.100} className="ml-[33px] mr-[15px] text-[#333]" />
      </div>
      <div className="flex h-[28px] items-end shrink-0 pl-[6px] tracking-[0.05px]">
        {tabs.map((x) => (
          <div key={x.t} className={`${x.w} h-[20px] pt-[1px] pl-[1px] flex items-center justify-center bg-[#f0f0f0] border-t border-r border-[#d9d9d9]`}>
            {x.t}
          </div>
        ))}
        <div className="w-[71px] h-[22px] flex items-center justify-center bg-white border-x border-t border-[#d9d9d9] -mb-px z-10">Protection</div>
      </div>
      <div className="ml-[6px] mr-[8px] h-[354px] bg-white border border-[#d9d9d9] shrink-0 pl-[7px] pt-[7px]">
        <div className="flex items-center h-[16px] gap-[2px]">
          <div className="w-[13px] h-[13px] border border-[#333] flex items-center justify-center">
            <svg width="11" height="9" viewBox="0 0 11 9">
              <path d="M1 4.500 4 8l6-7" fill="none" stroke="#333" />
            </svg>
          </div>
          <span className="border border-dotted border-[#555] px-[1px] leading-[13px] tracking-[-0.2px]">
            <span className="underline underline-offset-1">L</span>ocked
          </span>
        </div>
        <div className="flex items-center h-[18px] mt-[2px] gap-[3px]">
          <div className="w-[13px] h-[13px] border border-[#333]" />
          <span>
            H<span className="underline underline-offset-1">i</span>dden
          </span>
        </div>
        <p className="mt-[1px] text-[10.800px] leading-[13px] w-[470px]">
          Locking cells or hiding formulas has no effect until you protect the worksheet (Review tab, Protect group, Protect Sheet button).
        </p>
      </div>
      <div className="flex-1 flex items-center justify-end pr-[7px] gap-[17px] pb-[1px]">
        <div className="w-[73px] h-[21px] bg-[#e1e1e1] border-2 border-[#0078d7] flex items-center justify-center">OK</div>
        <div className="w-[64px] h-[21px] bg-[#e1e1e1] border border-[#adadad] flex items-center justify-center">Cancel</div>
      </div>
    </div>
  );
}

function Arrow({ className }: { className: string }) {
  return (
    <svg width="176" height="28" viewBox="0 0 176 28" className={`absolute ${className}`}>
      <polygon points="2,14 14,2 14,8 174,8 174,20 14,20 14,26" fill="#ff0000" stroke="#2f5597" strokeWidth="2" />
    </svg>
  );
}

export default function App() {
  return (
    <div className={`relative w-[1366px] h-[768px] overflow-hidden flex flex-col bg-white ${ui}`}>
      <div className="bg-[#2b579a] shrink-0">
        <TitleBar />
        <TabBar />
      </div>
      <Ribbon />
      <div className="flex-1 min-h-0 flex">
        <div className="w-[24px] shrink-0 bg-white" />
        <ExcelWindow />
        <WordScroll />
      </div>
      <WordBottom />
      <Taskbar />

      {/* picture resize handles */}
      <div className="absolute left-[19px] top-[348px] w-[10px] h-[10px] rounded-full bg-white border border-[#777]" />
      <div className="absolute left-[1342px] top-[348px] w-[10px] h-[10px] rounded-full bg-white border border-[#777]" />

      <Dialog />
      <Arrow className="left-[387px] top-[290px]" />
      <Arrow className="left-[736px] top-[644px]" />
    </div>
  );
}
